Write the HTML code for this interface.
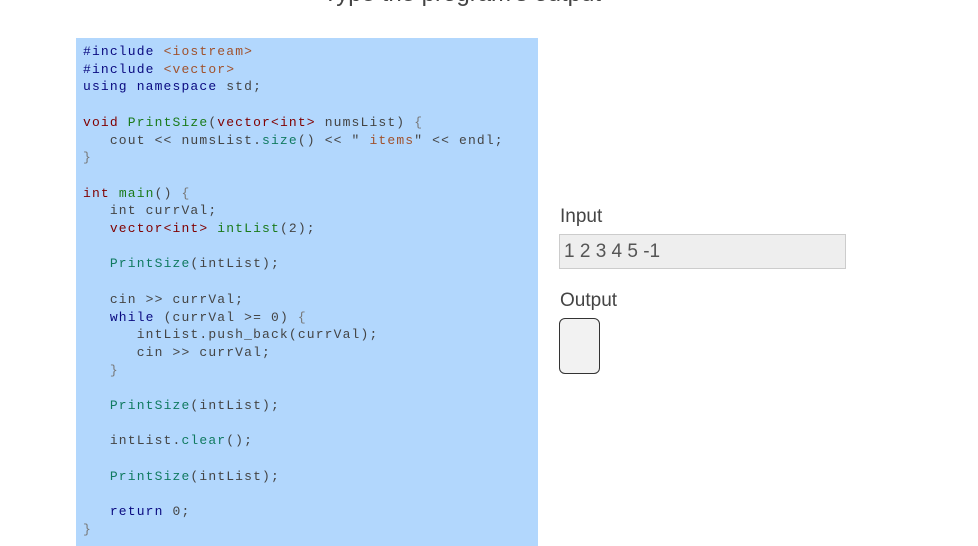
<!DOCTYPE html>
<html><head><meta charset="utf-8"><style>
html,body{margin:0;width:978px;height:546px;overflow:hidden}
body{background:#fff;position:relative;font-family:"Liberation Sans",sans-serif}
.title{position:absolute;left:0;width:924px;top:-20px;text-align:center;font-size:24px;color:#444;font-weight:300}
.code{position:absolute;left:76px;top:38px;width:462px;height:508px;background:#b2d7fd}
pre{margin:0;position:absolute;left:83px;top:43px;font-family:"Liberation Mono",monospace;font-size:13px;letter-spacing:1.15px;line-height:17.7px;color:#444}
.k{color:#0a0a80}.t{color:#800000}.f{color:#107a60}.s{color:#a0522d}.p{color:#777}.g{color:#1a7a1a}
.lab{position:absolute;left:560px;font-size:19px;color:#444;font-weight:300}
.inp{position:absolute;left:559px;top:234px;background:#eee;border:1px solid #ccc;font-size:19px;color:#555;line-height:33px;padding-left:4px;box-sizing:border-box;width:287px;height:35px}
.out{position:absolute;left:559px;top:318px;width:41px;height:56px;background:#f2f2f2;border:1.5px solid #333;border-radius:6px;box-sizing:border-box}
</style></head><body>
<div class="title">Type the program's output</div>
<div class="code"></div>
<pre><span class="k">#include</span> <span class="s">&lt;iostream&gt;</span>
<span class="k">#include</span> <span class="s">&lt;vector&gt;</span>
<span class="k">using namespace</span> std;

<span class="t">void</span> <span class="g">PrintSize</span>(<span class="t">vector&lt;int&gt;</span> numsList) <span class="p">{</span>
   cout &lt;&lt; numsList.<span class="f">size</span>() &lt;&lt; " <span class="s">items</span>" &lt;&lt; endl;
<span class="p">}</span>

<span class="t">int</span> <span class="g">main</span>() <span class="p">{</span>
   int currVal;
   <span class="t">vector&lt;int&gt;</span> <span class="g">intList</span>(2);

   <span class="f">PrintSize</span>(intList);

   cin &gt;&gt; currVal;
   <span class="k">while</span> (currVal &gt;= 0) <span class="p">{</span>
      intList.push_back(currVal);
      cin &gt;&gt; currVal;
   <span class="p">}</span>

   <span class="f">PrintSize</span>(intList);

   intList.<span class="f">clear</span>();

   <span class="f">PrintSize</span>(intList);

   <span class="k">return</span> 0;
<span class="p">}</span></pre>
<div class="lab" style="top:206px">Input</div>
<div class="inp">1 2 3 4 5 -1</div>
<div class="lab" style="top:290px">Output</div>
<div class="out"></div>
</body></html>
